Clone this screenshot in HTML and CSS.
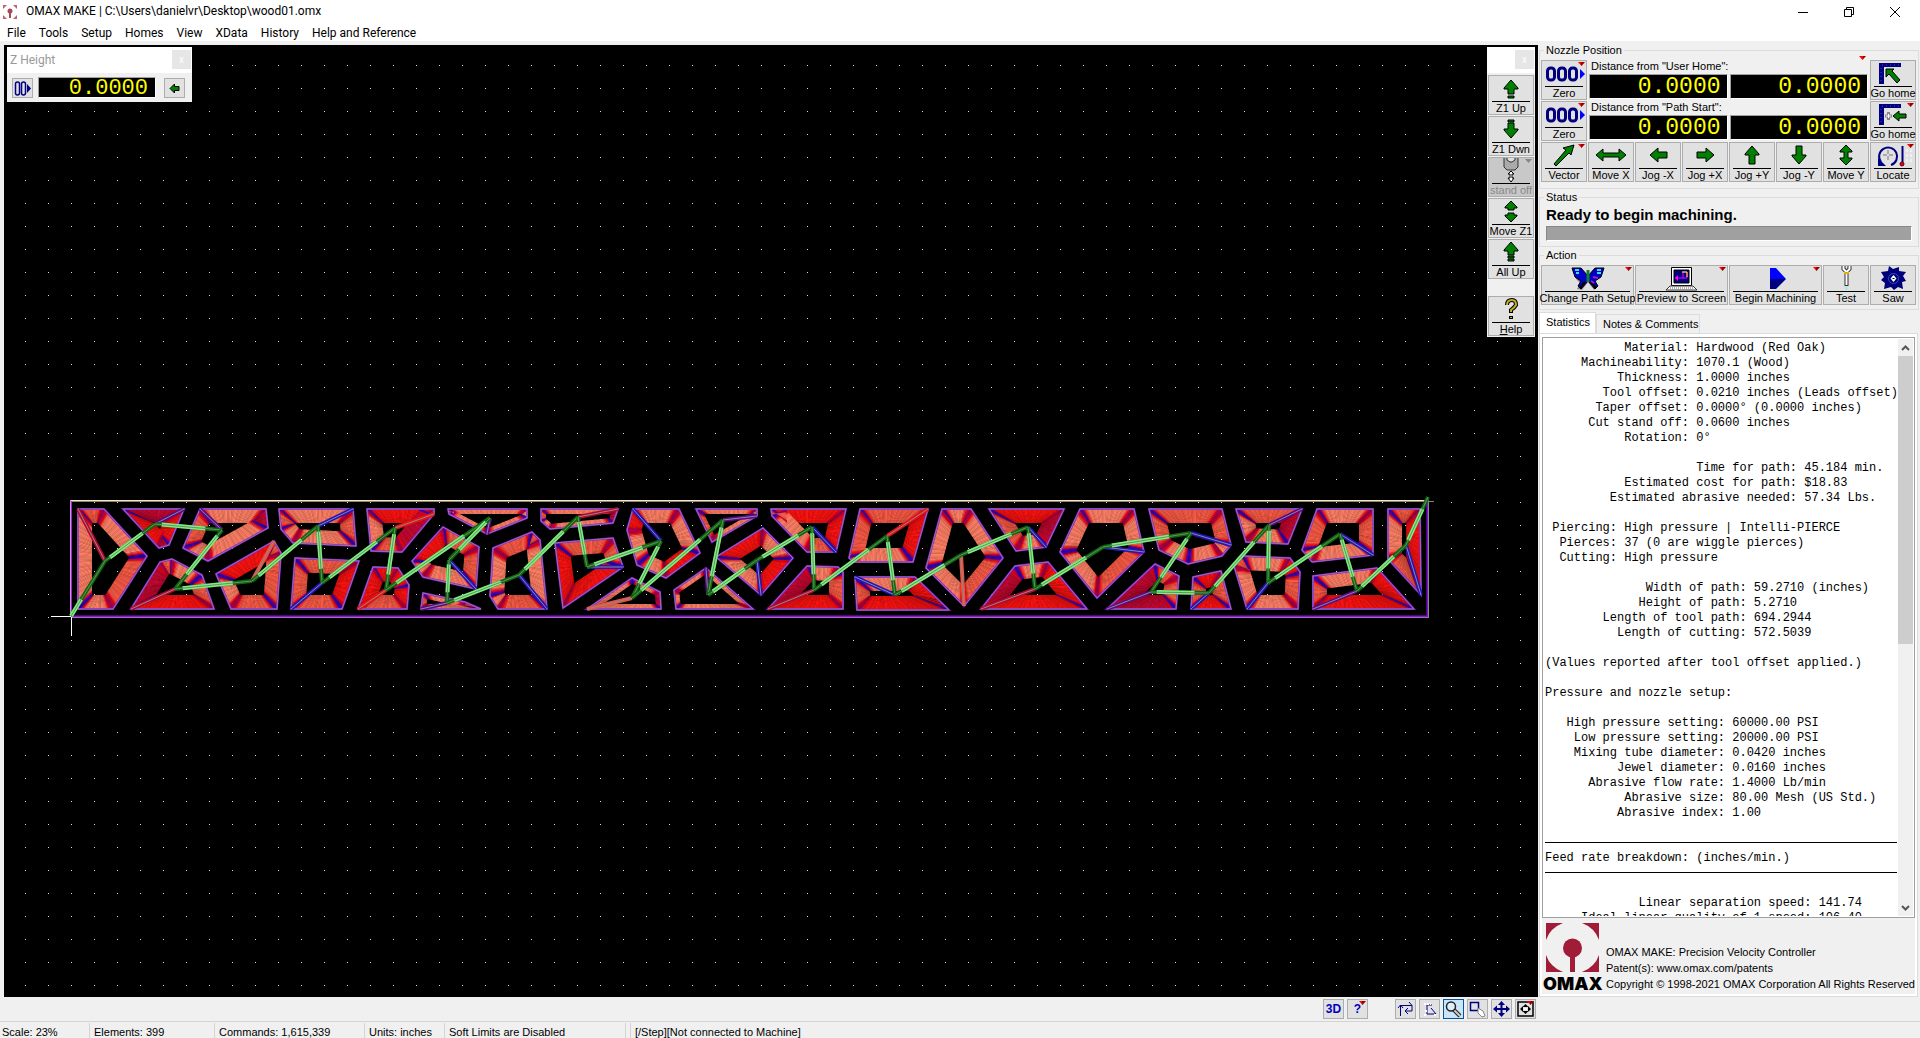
FILE: index.html
```html
<!DOCTYPE html>
<html lang="en">
<head>
<meta charset="utf-8">
<title>OMAX MAKE | C:\Users\danielvr\Desktop\wood01.omx</title>
<link rel="stylesheet" href="styles.css">
</head>
<body>
<svg class="defs" aria-hidden="true">
  <defs>
    <g id="zeros" fill="none" stroke="#000080" stroke-width="3">
      <rect x="5.500" y="7" width="7" height="12" rx="3"/><rect x="16.500" y="7" width="7" height="12" rx="3"/><rect x="27.500" y="7" width="7" height="12" rx="3"/>
      <path d="M38 8l5 5-5 5z" fill="#00f" stroke="none"/>
    </g>
    <g id="corner-rule"><path d="M8 2h22v4H13v17H8z" fill="#000080"/><path d="M11 4h17M10 7v15" stroke="#4040c0" stroke-dasharray="1 3"/></g>
  </defs>
</svg>

<header class="titlebar">
  <svg class="app-icon" width="14" height="14" viewBox="0 0 14 14"><path d="M0 0h4L0 4zM14 0h-4l4 4zM0 14v-4l4 4zM14 14v-4l-4 4z" fill="#c06070"/><circle cx="7" cy="6" r="2.500" fill="#a84858"/><path d="M6 7h2v6H6z" fill="#a84858"/></svg>
  <h1 class="title">OMAX MAKE | C:\Users\danielvr\Desktop\wood01.omx</h1>
  <div class="window-buttons">
    <button class="winbtn" aria-label="Minimize"><svg width="10" height="10"><path d="M0 5.500h10" stroke="#000"/></svg></button>
    <button class="winbtn" aria-label="Restore"><svg width="10" height="10"><path d="M.5 2.500h7v7h-7zM2.500 2.500v-2h7v7h-2" fill="none" stroke="#000"/></svg></button>
    <button class="winbtn" aria-label="Close"><svg width="10" height="10"><path d="M0 0l10 10M10 0L0 10" stroke="#000"/></svg></button>
  </div>
</header>

<nav class="menubar">
  <button>File</button><button>Tools</button><button>Setup</button><button>Homes</button><button>View</button><button>XData</button><button>History</button><button>Help and Reference</button>
</nav>

<main class="workspace">
  <section class="canvas" aria-label="Tool path">
    <svg id="path-view" class="path-view" width="1534" height="952" viewBox="4 45 1534 952"></svg>

    <div class="float z-height">
      <div class="float-title"><span>Z Height</span><button class="float-close" aria-label="Close">x</button></div>
      <div class="z-row">
        <button class="mini" aria-label="Zero Z"><svg width="19" height="18"><g fill="none" stroke="#000080" stroke-width="1.500"><rect x="2.500" y="3" width="4" height="13" rx="2"/><rect x="8.500" y="3" width="4" height="13" rx="2"/></g><path d="M14 5l4 4.500-4 4.500z" fill="#000080"/></svg></button>
        <output class="dro dro-z">0.0000</output>
        <button class="mini" aria-label="Set Z"><svg width="19" height="18"><path d="M5 9.500L9.500 5v2.500H14v4H9.500V14z" fill="#008000" stroke="#000"/></svg></button>
      </div>
    </div>

    <div class="float z-tools">
      <div class="float-title"><span></span><button class="float-close" aria-label="Close">x</button></div>
      <div class="z-stack">
        <button class="tool"><svg class="icon" viewBox="0 0 44 25"><path d="M22 4l7 8v1h-4v5h-6v-5h-4v-1zM19 20h6v2h-6z" fill="#008000" stroke="#000"/></svg><span>Z1 Up</span></button>
        <button class="tool"><svg class="icon" viewBox="0 0 44 25"><path d="M22 21l7-8v-1h-4V6h-6v6h-4v1zM19 3h6v2h-6z" fill="#008000" stroke="#000"/></svg><span>Z1 Dwn</span></button>
        <button class="tool menu-mark off" disabled><svg class="icon" viewBox="0 0 44 25"><path d="M15 0v9l3 3h8l3-3V0" fill="#aaa" stroke="#333"/><path d="M18 0v2l3 2h2l3-2V0" fill="#ddd" stroke="#333"/><path d="M22 13l3 3h-2v4h2l-3 4-3-4h2v-4h-2z" fill="#fff" stroke="#000"/></svg><span>stand off</span></button>
        <button class="tool"><svg class="icon" viewBox="0 0 44 25"><path d="M22 2l6 6v1h-3v2h-6V9h-3V8zM22 23l6-6v-1h-3v-2h-6v2h-3v1z" fill="#008000" stroke="#000"/></svg><span>Move Z1</span></button>
        <button class="tool"><svg class="icon" viewBox="0 0 44 25"><path d="M22 2l7 8v1h-4v4h-6v-4h-4v-1zM19 16h6v2h-6zM19 19h6v2h-6z" fill="#008000" stroke="#000"/></svg><span>All Up</span></button>
        <button class="tool help"><svg class="icon" viewBox="0 0 44 25"><path d="M18 8q0-5 5-5 4 0 4 5-1 2-5 5v3M22 19v3" fill="none" stroke="#000" stroke-width="4"/><path d="M18 8q0-5 5-5 4 0 4 5-1 2-5 5v2M22 20v1" fill="none" stroke="#c0b020" stroke-width="2"/></svg><span><u>H</u>elp</span></button>
      </div>
    </div>
  </section>

  <aside class="side">
    <fieldset class="group nozzle">
      <legend>Nozzle Position</legend>
      <button class="tool menu-mark"><svg class="icon" viewBox="0 0 44 25"><use href="#zeros"/></svg><span>Zero</span></button>
      <div class="readout menu-mark"><span class="readout-label">Distance from "User Home":</span><output class="dro">0.0000</output><output class="dro">0.0000</output></div>
      <button class="tool"><svg class="icon" viewBox="0 0 44 25"><use href="#corner-rule"/><path d="M15 8h8l-2 2 8 9-3 3-8-9-3 3z" fill="#008000" stroke="#000"/></svg><span>Go home</span></button>

      <button class="tool menu-mark"><svg class="icon" viewBox="0 0 44 25"><use href="#zeros"/></svg><span>Zero</span></button>
      <div class="readout"><span class="readout-label">Distance from "Path Start":</span><output class="dro">0.0000</output><output class="dro">0.0000</output></div>
      <button class="tool menu-mark"><svg class="icon" viewBox="0 0 44 25"><use href="#corner-rule"/><path d="M14 14h7M17.500 10v8" stroke="#888" stroke-width="3"/><path d="M15 14h5M17.500 12v4" stroke="#fff"/><path d="M22 14l6-5v3h7v4h-7v3z" fill="#008000" stroke="#000"/></svg><span>Go home</span></button>

      <button class="tool menu-mark"><svg class="icon" viewBox="0 0 44 25"><path d="M32 2l-3 10-2-2-13 13-2-2 12-14-3-2z" fill="#008000" stroke="#000"/></svg><span>Vector</span></button>
      <button class="tool"><svg class="icon" viewBox="0 0 44 25"><path d="M7 12l7-6v4h16V6l7 6-7 6v-4H14v4z" fill="#008000" stroke="#000"/></svg><span>Move X</span></button>
      <button class="tool"><svg class="icon" viewBox="0 0 44 25"><path d="M14 12l8-7v4h9v6h-9v4z" fill="#008000" stroke="#000"/></svg><span>Jog -X</span></button>
      <button class="tool"><svg class="icon" viewBox="0 0 44 25"><path d="M31 12l-8-7v4h-9v6h9v4z" fill="#008000" stroke="#000"/></svg><span>Jog +X</span></button>
      <button class="tool"><svg class="icon" viewBox="0 0 44 25"><path d="M22 3l7 8v1h-4v9h-6v-9h-4v-1z" fill="#008000" stroke="#000"/></svg><span>Jog +Y</span></button>
      <button class="tool"><svg class="icon" viewBox="0 0 44 25"><path d="M22 21l7-8v-1h-4V3h-6v9h-4v1z" fill="#008000" stroke="#000"/></svg><span>Jog -Y</span></button>
      <button class="tool"><svg class="icon" viewBox="0 0 44 25"><path d="M22 2l6 6v1h-4v6h4v1l-6 6-6-6v-1h4V9h-4V8z" fill="#008000" stroke="#000"/></svg><span>Move Y</span></button>
      <button class="tool menu-mark"><svg class="icon" viewBox="0 0 44 25"><path d="M10 19a9 9 0 1 1 10 3" fill="none" stroke="#000080" stroke-width="2"/><path d="M7 15v8h8z" fill="#000080"/><path d="M12 12h4m2 0h4M17 7v4m0 2v4" stroke="#777"/><path d="M31.500 3v16" stroke="#000080" stroke-width="2"/><path d="M36 6v15M40 6v15" stroke="#fff" stroke-dasharray="3 2"/><circle cx="31" cy="21" r="2" fill="#d00020" stroke="#600"/></svg><span>Locate</span></button>
    </fieldset>

    <fieldset class="group status">
      <legend>Status</legend>
      <p class="status-text">Ready to begin machining.</p>
      <div class="progress" role="progressbar" aria-label="Progress"></div>
    </fieldset>

    <fieldset class="group actions">
      <legend>Action</legend>
      <button class="tool menu-mark"><svg class="icon" viewBox="0 0 44 25"><path d="M9 5l5-2 8 7 6-7 8-1-3 9-5 4 3 6-3 3-6-8-6 8-5-1 3-6-4-4z" fill="#888"/><path d="M6 2l9 0 7 8 7-8 9 0-3 9-6 4 3 5-3 3-7-8-7 8-3-3 3-5-6-4z" fill="#0000c8" stroke="#000"/><path d="M14 22l5-6M30 22l-5-6" stroke="#000" stroke-width="2"/><path d="M9 4h4M31 4h4M10 7h3M31 7h4" stroke="#30e0f0" stroke-width="2"/><path d="M27 11l5 1M25 15l3 2" stroke="#a020c0" stroke-width="2"/><path d="M22 4v12" stroke="#108030" stroke-width="3"/></svg><span>Change Path Setup</span></button>
      <button class="tool menu-mark"><svg class="icon" viewBox="0 0 44 25"><path d="M11.500 1.500h20v18h-20z" fill="#fff" stroke="#000"/><path d="M14 4h15v13H14z" fill="#000080" stroke="#000"/><path d="M15 12h8V6h4v6h-4" fill="none" stroke="#f0f"/><path d="M22 6h5v5" stroke="#ff0" fill="none"/><path d="M15 12l3-3v6z" fill="#f0f"/><path d="M10 20h23l4 4H6z" fill="#fff" stroke="#333"/><path d="M10 22h23" stroke="#666" stroke-dasharray="1 1"/></svg><span>Preview to Screen</span></button>
      <button class="tool menu-mark"><svg class="icon" viewBox="0 0 44 25"><path d="M16 2h6l10 11H16z" fill="#00f"/><path d="M16 13h16L22 23h-6z" fill="#000080"/></svg><span>Begin Machining</span></button>
      <button class="tool"><svg class="icon" viewBox="0 0 44 25"><path d="M19.500 0v3l3 3 3-3V0M22.500 6v14" fill="none" stroke="#333" stroke-width="4"/><path d="M19.500 0v3l3 3 3-3V0M22.500 5v14" fill="none" stroke="#fff" stroke-width="2"/><path d="M20 7h5" stroke="#e0b000" stroke-width="2"/><path d="M22.500 20v4" stroke="#a0e8f0" stroke-width="2"/></svg><span>Test</span></button>
      <button class="tool"><svg class="icon" viewBox="0 0 44 25"><path d="M18 0l4 3 6-2v4l7 1-3 4 3 5-4 1 1 7-5-2-4 3-3-3-7 2 1-6-4-3 3-3-3-5 7-1z" fill="#00007a"/><circle cx="22.500" cy="12.500" r="5" fill="none" stroke="#3050c0"/><path d="M22.500 9l3 3.500-3 3.500-3-3.500z" fill="#fff"/><path d="M21.500 12h2v1h-2z"/></svg><span>Saw</span></button>
    </fieldset>

    <div class="tabs" role="tablist">
      <button class="tab active" role="tab" aria-selected="true">Statistics</button>
      <button class="tab" role="tab" aria-selected="false">Notes &amp; Comments</button>
    </div>
    <div class="tab-page">
      <div class="report">
        <div class="report-text">
<pre>           Material: Hardwood (Red Oak)
     Machineability: 1070.1 (Wood)
          Thickness: 1.0000 inches
        Tool offset: 0.0210 inches (Leads offset)
       Taper offset: 0.0000° (0.0000 inches)
      Cut stand off: 0.0600 inches
           Rotation: 0°

                     Time for path: 45.184 min.
           Estimated cost for path: $18.83
         Estimated abrasive needed: 57.34 Lbs.

 Piercing: High pressure | Intelli-PIERCE
  Pierces: 37 (0 are wiggle pierces)
  Cutting: High pressure

              Width of path: 59.2710 (inches)
             Height of path: 5.2710
        Length of tool path: 694.2944
          Length of cutting: 572.5039

(Values reported after tool offset applied.)

Pressure and nozzle setup:

   High pressure setting: 60000.00 PSI
    Low pressure setting: 20000.00 PSI
    Mixing tube diameter: 0.0420 inches
          Jewel diameter: 0.0160 inches
      Abrasive flow rate: 1.4000 Lb/min
           Abrasive size: 80.00 Mesh (US Std.)
          Abrasive index: 1.00

</pre><hr><pre>Feed rate breakdown: (inches/min.)</pre><hr><pre>

             Linear separation speed: 141.74
     Ideal linear quality of 1 speed: 106.40</pre>
        </div>
        <div class="scrollbar">
          <button aria-label="Scroll up"><svg width="9" height="6"><path d="M1 5l3.500-3.500L8 5" fill="none" stroke="#555" stroke-width="2"/></svg></button>
          <div class="track"><div class="thumb"></div></div>
          <button aria-label="Scroll down"><svg width="9" height="6"><path d="M1 1l3.500 3.500L8 1" fill="none" stroke="#555" stroke-width="2"/></svg></button>
        </div>
      </div>
      <div class="about">
        <svg width="60" height="70" viewBox="0 0 60 70" role="img" aria-label="OMAX"><g fill="#a01c37"><path d="M3 1h17Q7 6 3 18zM56 1H39q13 5 17 17zM3 50V33q4 12 17 17zM56 50V33q-4 12-17 17z"/><circle cx="29.500" cy="26" r="9.500"/><path d="M27 30h5v20h-5z"/></g><text class="logo-word" x="0" y="68">OMAX</text></svg>
        <p>OMAX MAKE: Precision Velocity Controller<br>Patent(s): www.omax.com/patents<br>Copyright © 1998-2021 OMAX Corporation All Rights Reserved</p>
      </div>
    </div>
  </aside>
</main>

<div class="viewbar">
  <div class="viewbtns">
    <button class="mini text">3D</button>
    <button class="mini text menu-mark">?</button>
  </div>
  <div class="viewbtns">
    <button class="mini" aria-label="Traverses"><svg width="19" height="18"><path d="M4.500 16V5.500H16V11H9M2 8l2.500-3L7 8M13 2l3 3.500M12 8l-3 3 3 3" fill="none" stroke="#000080"/></svg></button>
    <button class="mini" aria-label="Outline"><svg width="19" height="18"><path d="M12 5H7v9h9l-5-6" fill="none" stroke="#000080"/><path d="M4 4h7M4 15h3M14 15h3M5 11h3" stroke="#fff" stroke-width="2" stroke-dasharray="2 1"/></svg></button>
    <button class="mini pressed" aria-label="Zoom"><svg width="19" height="18"><path d="M10 10l6 6" stroke="#222" stroke-width="4"/><path d="M10 10l6 6" stroke="#ccc" stroke-width="2"/><circle cx="7" cy="6.500" r="4.500" fill="#d8f0f8" stroke="#222" stroke-width="1.500"/></svg></button>
    <button class="mini" aria-label="Zoom window"><svg width="19" height="18"><path d="M2.500 2.500h8v8h-8z" fill="none" stroke="#000080" stroke-width="1.500"/><path d="M10 8l5 3 2 5-3 1-4-4z" fill="#fff" stroke="#888"/></svg></button>
    <button class="mini" aria-label="Pan"><svg width="19" height="18"><path d="M3 9h13M9.500 3v12" stroke="#000080" stroke-width="2"/><path d="M1 9l4-3.500v7zM18 9l-4-3.500v7zM9.500 1L6 5h7zM9.500 17L6 13h7z" fill="#000080"/></svg></button>
    <button class="mini menu-mark" aria-label="Zoom extents"><svg width="19" height="18"><path d="M2 2h15v14H2z" fill="none" stroke="#000" stroke-width="1.500"/><path d="M4 9l3-3v6zM15 9l-3-3v6zM9.500 4l-3 3h6zM9.500 14l-3-3h6z" fill="#000"/><path d="M8 8h3v2H8z" fill="#fff"/></svg></button>
  </div>
</div>

<footer class="statusbar">
  <span class="c-scale">Scale: 23%</span><span class="c-elements">Elements: 399</span><span class="c-commands">Commands: 1,615,339</span><span class="c-units">Units: inches</span><span class="c-limits">Soft Limits are Disabled</span><span class="c-gap"></span><span class="c-machine">[/Step][Not connected to Machine]</span>
</footer>
<script src="toolpath.js"></script>
</body>
</html>
```
FILE: styles.css
```css
* { box-sizing: border-box; }
body {
  margin: 0;
  height: 100vh;
  display: flex;
  flex-direction: column;
  overflow: hidden;
  background: #f0f0f0;
  color: #000;
  font: 11px/16px "Liberation Sans", Arial, sans-serif;
}
button { font: inherit; color: inherit; margin: 0; padding: 0; }
.defs { position: absolute; width: 0; height: 0; }

.titlebar { display: flex; align-items: center; height: 23px; background: #fff; padding-left: 3px; flex: none; }
.title { margin: 0 auto 0 9px; font: 12px/23px Roboto, sans-serif; }
.window-buttons { display: flex; padding-right: 2px; }
.winbtn { width: 46px; height: 21px; border: 0; background: none; display: grid; place-items: center; }

.menubar { display: flex; gap: 13px; height: 18px; padding: 0 7px; background: #fff; flex: none; }
.menubar button { border: 0; background: none; font: 12px/20px Roboto, sans-serif; }

.workspace { flex: 1; min-height: 0; display: flex; padding-left: 4px; }
.canvas { flex: 1; min-width: 0; margin-top: 4px; background: #000; position: relative; overflow: hidden; }
.path-view { position: absolute; left: 0; top: 0; }

.float { position: absolute; top: 2px; background: #f0f0f0; }
.float-title { display: flex; justify-content: space-between; height: 26px; padding: 3px 1px 4px 3px; background: #fff; color: #999; font: 12px/20px Roboto, sans-serif; }
.float-close { width: 19px; height: 19px; border: 0; background: #e6e6e6; color: #fff; font-size: 10px; line-height: 16px; }
.z-height { left: 3px; width: 185px; }
.z-row { display: flex; align-items: center; padding: 4px 7px 4px 5px; }
.z-row .dro-z { margin: 0 8px 0 5px; }
.z-tools { right: 3px; width: 48px; }
.z-stack { display: flex; flex-direction: column; gap: 1px; padding: 2px 1px 1px; }
.help { margin-top: 16px; }

.mini { position: relative; width: 21px; height: 20px; flex: none; border: 1px solid #adadad; background: #e1e1e1; display: grid; place-items: center; }
.mini.text { color: #0000c0; font-weight: bold; font-size: 12px; line-height: 18px; }
.mini.pressed { background: #cce4f7; border-color: #0054a0; }

.dro { flex: 1; height: 25px; padding-right: 6px; background: #000; border: 1px solid #a0a0a0; border-color: #a0a0a0 #fff #fff #a0a0a0; color: #ff0; font: 23px/25px "Liberation Mono", monospace; text-align: right; }
.dro-z { height: 21px; font-size: 22px; line-height: 22px; padding-right: 7px; }

.tool { position: relative; height: 40px; min-width: 0; border: 1px solid #adadad; background: #e1e1e1; display: flex; flex-direction: column; align-items: center; line-height: 13px; white-space: nowrap; }
.tool .icon { width: 44px; height: 25px; flex: none; }
.tool span { flex: 1; align-self: stretch; padding-top: 1px; background: linear-gradient(#000, #000) center top / calc(100% - 6px) 1px no-repeat; display: flex; justify-content: center; }
.tool.off { background: #c8c8c8; color: #888; }
.menu-mark { position: relative; }
.menu-mark::after { content: ""; position: absolute; top: 1px; right: 1px; width: 7px; height: 4px; background: linear-gradient(90deg, #f00 50%, #900 50%); clip-path: polygon(0 0, 100% 0, 50% 100%); }
.off::after { background: #888; }

.side { flex: none; width: 382px; padding: 0 1px; display: flex; flex-direction: column; min-height: 0; }
.group { margin: 0; border: 1px solid #dcdcdc; padding: 0 2px; min-width: 0; }
.group legend { margin-left: 3px; padding: 0 2px; line-height: 16px; }
.nozzle { display: grid; grid-template-columns: repeat(8, 1fr); gap: 1px; height: 147px; padding: 2px 2px 5px 1px; margin-top: 1px; align-content: start; }
.readout { grid-column: span 6; height: 40px; display: flex; flex-wrap: wrap; gap: 0 2px; padding: 0 1px; }
.readout-label { flex: 0 0 100%; line-height: 13px; padding-left: 2px; }
.readout.menu-mark::after { top: -4px; right: 3px; }
.status { height: 58px; padding: 0 6px 6px; }
.status legend { margin-left: -2px; }
.status-text { margin: 0 0 1px; font-size: 15px; line-height: 20px; font-weight: bold; }
.progress { height: 15px; background: #a0a0a0; border: 1px solid; border-color: #888 #fff #fff #888; }
.actions { height: 63px; display: grid; grid-template-columns: 93fr 93fr 93fr 46fr 46fr; gap: 1px; padding: 2px 2px 0 1px; align-content: start; }

.tabs { display: flex; align-items: flex-end; margin-top: 2px; flex: none; }
.tab { height: 19px; border: 1px solid #dcdcdc; border-bottom: 0; background: #f0f0f0; padding: 0 1px 0 6px; line-height: 19px; }
.tab.active { height: 21px; background: #fff; padding: 0 5px 2px 6px; }
.tab-page { flex: 1; min-height: 0; display: flex; flex-direction: column; background: #fff; border: 1px solid #dcdcdc; padding: 3px 2px 2px; margin-right: 1px; }
.report { flex: 1; min-height: 0; display: flex; border: 1px solid #a0a0a0; padding: 1px; }
.report-text { flex: 1; min-width: 0; overflow: hidden; padding: 2px 0 0 1px; }
.report-text pre { margin: 0; font: 12px/15px "Liberation Mono", monospace; }
.report-text hr { margin: 0 1px 0 0; height: 15px; border: 0; background: linear-gradient(#000, #000) 0 6px / 100% 1px no-repeat; }
.scrollbar { width: 15px; display: flex; flex-direction: column; background: #f0f0f0; }
.scrollbar button { height: 17px; border: 0; background: none; display: grid; place-items: center; }
.track { flex: 1; }
.thumb { height: 53%; background: #cdcdcd; }
.about { display: flex; align-items: flex-end; gap: 3px; height: 76px; background: #f0f0f0; padding: 0 0 2px 1px; flex: none; }
.about svg { flex: none; overflow: visible; }
.about p { margin: 0; white-space: nowrap; }
.logo-word { font: 900 18px "Inter", "Liberation Sans", sans-serif; }

.viewbar { flex: none; display: flex; justify-content: flex-end; gap: 27px; height: 24px; padding: 2px 384px 0 0; }
.viewbtns { display: flex; gap: 3px; }

.statusbar { flex: none; display: flex; height: 17px; border-top: 1px solid #d4d4d4; padding-top: 1px; line-height: 19px; white-space: nowrap; }
.statusbar span { flex: none; border-right: 1px solid #d4d4d4; padding-left: 4px; }
.statusbar .c-scale { width: 90px; padding-left: 2px; }
.c-elements { width: 125px; }
.c-commands { width: 150px; }
.c-units { width: 80px; }
.c-limits { width: 181px; }
.c-gap { width: 4px; }
.statusbar .c-machine { flex: 1; border-right: 0; }
```
FILE: toolpath.js
```javascript
const NS = "http://www.w3.org/2000/svg";
const view = document.getElementById("path-view");

// Each part: outline corners, tone of each edge, lead-in (start, pierce), lead tone, band depth.
// Tones: s salmon, o orange-red, r red, c crimson, b blue, p purple.
const parts = [
  ["78,509 104,509 147,556 113,609 78,609", "ososs", "78,509 105,561", "c"],
  ["123,509 184,509 169,545 159,548", "crcr", "184,509 155,524", "p", 20],
  ["200,509 266,509 268,528 208,561 183,548", "scsso", "200,509 222,530", "p"],
  ["172,559 160,562 131,609 214,609 202,575", "ocros", "131,609 175,589", "c"],
  ["274,541 281,553 277,609 231,609 216,574", "ooosr", "274,541 252,581", "o"],
  ["279,509 353,509 356,546 293,543 281,529", "sosso", "353,509 318,526", "b"],
  ["295,558 359,561 342,609 291,609", "oroo", "291,609 322,583", "b"],
  ["367,509 434,509 434,514 402,552 371,551", "rrcos", "434,514 395,528", "r"],
  ["373,567 398,568 409,585 407,609 358,609", "rrror", "358,609 386,590", "r"],
  ["448,509 527,509 527,518 487,534 449,514", "sssss", "487,534 490,518", "p", 5],
  ["443,527 479,547 476,589 423,577 412,561", "oossr", "476,589 449,560", "b"],
  ["423,593 465,602 481,609 421,609", "soso", "421,609 447,603", "p", 5],
  ["532,532 540,540 547,609 498,609 490,596 493,548", "ososso", "547,609 519,575", "b"],
  ["541,509 618,509 613,523 550,529 541,521", "scsso", "618,509 578,517", "c", 5],
  ["555,543 613,538 623,567 563,608", "oorr", "623,567 587,567", "b"],
  ["633,509 679,509 700,553 666,578 637,565 627,530", "ssrssr", "633,509 661,541", "b"],
  ["632,578 660,592 661,609 587,609", "scss", "587,609 632,598", "o", 5],
  ["696,509 757,509 757,516 712,542", "ssso", "757,516 723,520", "p", 5],
  ["706,568 753,609 676,609 674,590", "ssss", "706,568 708,595", "p", 5],
  ["716,557 763,528 793,558 761,595", "rsrs", "761,595 757,560", "b"],
  ["771,509 846,509 836,552 807,552 772,516", "rroso", "836,552 812,527", "b"],
  ["807,566 838,567 843,572 843,609 768,609", "soorc", "768,609 814,590", "c"],
  ["860,509 928,509 913,562 853,562 849,558", "orsoo", "928,509 887,536", "r"],
  ["855,577 915,577 949,610 857,610", "srro", "855,577 895,595", "b"],
  ["942,509 971,509 1003,558 964,606 926,568", "ssoss", "964,606 961,555", "o"],
  ["989,509 1064,509 1046,547 1016,551", "rcso", "1046,547 1028,527", "b"],
  ["1015,566 1048,562 1087,609 981,609", "srrc", "981,609 1035,589", "c"],
  ["1080,509 1134,509 1144,552 1097,598 1060,552", "ssoss", "1144,552 1103,547", "b"],
  ["1149,509 1222,509 1231,545 1222,556 1188,564 1159,550", "oossso", "1231,545 1191,533", "b"],
  ["1155,564 1179,576 1176,609 1107,609", "oocc", "1107,609 1151,592", "p"],
  ["1193,577 1221,571 1231,609 1191,609", "roro", "1191,609 1209,593", "b"],
  ["1236,509 1302,509 1288,544 1246,542", "ocss", "1302,509 1269,525", "p"],
  ["1243,556 1290,558 1300,572 1298,609 1247,609 1234,566", "srosso", "1247,609 1268,583", "b"],
  ["1317,509 1373,509 1373,555 1312,562 1302,550", "sosso", "1373,555 1340,534", "b"],
  ["1313,576 1377,568 1414,609 1313,609", "srro", "1313,609 1357,591", "p"],
  ["1388,509 1420,509 1421,595 1388,559", "oros", "1421,595 1406,545", "b"]
];
const tones = { s: [236, 118, 94], o: [230, 84, 64], r: [234, 18, 16], c: [182, 8, 46], b: [34, 20, 190], p: [90, 10, 140] };
const red = [228, 0, 10], blue = [50, 0, 180];

const pts = s => s.split(" ").map(p => p.split(",").map(Number));
const mix = (a, b, t) => a.map((v, i) => v + (b[i] - v) * t);
const fmt = list => list.map(p => p[0].toFixed(1) + "," + p[1].toFixed(1)).join(" ");

function add(name, attrs) {
  const el = document.createElementNS(NS, name);
  for (const k in attrs) el.setAttribute(k, attrs[k]);
  view.appendChild(el);
}
function line(a, b, stroke, width) {
  add("line", { x1: a[0], y1: a[1], x2: b[0], y2: b[1], stroke, "stroke-width": width });
}

// Corners of the outline moved inward by the band depth.
function inset(poly, depth) {
  const n = poly.length;
  const c = mix([0, 0], poly.reduce((s, p) => [s[0] + p[0], s[1] + p[1]], [0, 0]), 1 / n);
  const edges = poly.map((a, i) => {
    const b = poly[(i + 1) % n];
    const len = Math.hypot(b[0] - a[0], b[1] - a[1]);
    let nx = -(b[1] - a[1]) / len, ny = (b[0] - a[0]) / len;
    if ((c[0] - a[0]) * nx + (c[1] - a[1]) * ny < 0) { nx = -nx; ny = -ny; }
    return [nx, ny, nx * a[0] + ny * a[1] + depth];
  });
  return poly.map((p, i) => {
    const e = edges[(i + n - 1) % n], f = edges[i];
    const det = e[0] * f[1] - e[1] * f[0];
    const q = [(e[2] * f[1] - e[1] * f[2]) / det, (e[0] * f[2] - e[2] * f[0]) / det];
    const far = Math.hypot(q[0] - p[0], q[1] - p[1]);
    const max = Math.hypot(c[0] - p[0], c[1] - p[1]) * 0.8;
    return far > max ? mix(p, q, max / far) : q;
  });
}

// Grid
for (let y = 65; y < 997; y += 23)
  for (let x = 25; x < 1538; x += 23)
    add("rect", { x, y, width: 1, height: 1, fill: "#ddd" });

// Stock outline
line([71, 500.5], [1427, 500.5], "#ffe8b0", 1);
line([71, 501.5], [1434, 501.5], "#888", 1);
line([70.5, 500], [70.5, 617], "#c89cc0", 1);
line([71.5, 501], [71.5, 617], "#a020f0", 1);
line([71, 616.5], [1429, 616.5], "#a000ff", 2);
line([71, 617.5], [1429, 617.5], "#888", 1);
line([1427.5, 498], [1427.5, 617], "#8010d0", 2);
line([1428.5, 498], [1428.5, 617], "#888", 1);
line([51, 616.5], [71, 616.5], "#fff", 1);
line([71.5, 617], [71.5, 636], "#fff", 1);

for (const [outline, edgeTones, , , depth = 14] of parts) {
  const outer = pts(outline), inner = inset(outer, depth), n = outer.length;
  outer.forEach((a, i) => {
    const b = outer[(i + 1) % n], ia = inner[i], ib = inner[(i + 1) % n];
    const len = Math.hypot(b[0] - a[0], b[1] - a[1]);
    const steps = Math.max(4, Math.round(len / 1.5));
    const mid = tones[edgeTones[i]];
    const scale = Math.min(1, len / 30);
    for (let k = 0; k < steps; k++) {
      // Distance in pixels to the nearer corner: the cut slows down there.
      const d = Math.min(k + 0.5, steps - k - 0.5) / steps * len / scale;
      // Every second corner is only slowed to red.
      const corner = (k * 2 < steps ? i : i + 1) % 2 ? mix(blue, red, 0.6) : blue;
      let color = d < 2 ? corner : d < 4 ? mix(corner, red, (d - 2) / 2)
        : d < 8 ? mix(red, mid, (d - 4) / 4) : mid;
      const shade = 0.94 + ((k * 37 + i * 11) % 7) / 40;
      color = color.map(v => Math.min(255, Math.round(v * shade)));
      const t = k / steps, u = Math.min(1, (k + 1.3) / steps);
      add("polygon", {
        points: fmt([mix(a, b, t), mix(a, b, u), mix(ia, ib, u), mix(ia, ib, t)]),
        fill: `rgb(${color})`
      });
    }
  });
  add("polygon", { points: outline, fill: "none", stroke: "#8a14e8", "stroke-width": 2 });
  add("polygon", { points: outline, fill: "none", stroke: "#8c7c84", "stroke-width": 1 });
}

// Lead-ins
for (const [, , lead, tone] of parts) {
  const [a, b] = pts(lead);
  line(a, b, `rgb(${tones[tone]})`, 4);
  line(a, b, "#8c8890", 1);
}

// Traverses between pierce points
const stops = [[71, 616], ...parts.map(p => pts(p[2])[1]), [1428, 497]];
for (let i = 0; i + 1 < stops.length; i++) {
  const a = stops[i], b = stops[i + 1];
  line(a, b, "#0a6a0a", 4);
  line(mix(a, b, i ? 0.1 : 0), mix(a, b, i ? 0.75 : 0.3), "#7cf07c", 4);
  line(a, b, "#708870", 1);
}
```
